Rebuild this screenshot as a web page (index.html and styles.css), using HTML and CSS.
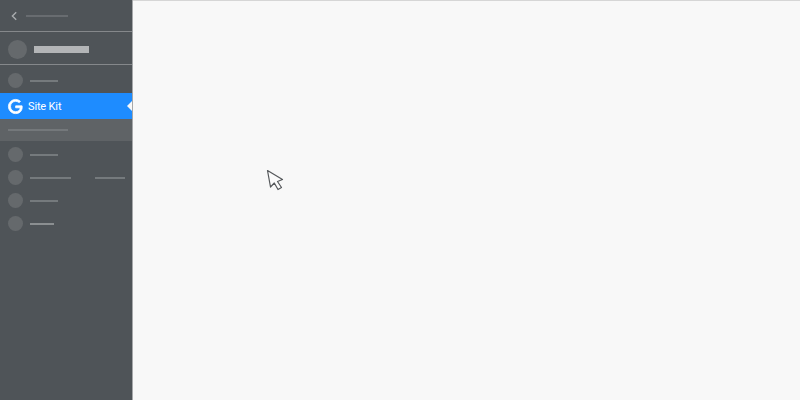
FILE: index.html
```html
<!DOCTYPE html>
<html lang="en">
<head>
  <meta charset="UTF-8">
  <title>Site Kit</title>
  <link rel="stylesheet" href="styles.css">
</head>
<body>
  <div class="app">

    <!-- Sidebar -->
    <nav class="sidebar">
      <div class="back-row">
        <svg class="chevron" width="8" height="12" viewBox="0 0 8 12">
          <path d="M6.2 2.2 2.4 6 6.2 9.8" fill="none" stroke="#a9acae" stroke-width="1.4"/>
        </svg>
        <span class="bar bar-back"></span>
      </div>

      <div class="account-row">
        <span class="dot dot-large"></span>
        <span class="bar bar-account"></span>
      </div>

      <div class="item item-first">
        <span class="dot"></span>
        <span class="bar bar-short"></span>
      </div>

      <div class="item-active">
        <svg class="g-logo" width="17" height="17" viewBox="0 0 24 24">
          <path fill="#fff" stroke="#fff" stroke-width="1.1" d="M21.35 11.1h-9.17v2.73h6.51c-.33 3.81-3.5 5.44-6.5 5.44C8.36 19.27 5 16.25 5 12c0-4.1 3.2-7.27 7.2-7.27 3.09 0 4.9 1.97 4.9 1.97L19 4.72S16.56 2 12.1 2C6.42 2 2 6.8 2 12c0 5.05 4.13 10 10.22 10 5.35 0 9.25-3.67 9.25-9.09 0-1.15-.12-1.81-.12-1.81z"/>
        </svg>
        <span class="item-label">Site Kit</span>
        <span class="active-arrow"></span>
      </div>

      <div class="section-row">
        <span class="bar bar-section"></span>
      </div>

      <div class="item-list">
        <div class="item">
          <span class="dot"></span>
          <span class="bar bar-short"></span>
        </div>
        <div class="item">
          <span class="dot"></span>
          <span class="bar bar-long"></span>
          <span class="bar bar-side"></span>
        </div>
        <div class="item">
          <span class="dot"></span>
          <span class="bar bar-short"></span>
        </div>
        <div class="item">
          <span class="dot"></span>
          <span class="bar bar-tiny"></span>
        </div>
      </div>
    </nav>

    <!-- Empty content area -->
    <main class="content"></main>
  </div>

  <svg class="cursor" width="20" height="24" viewBox="0 0 20 24">
    <path d="M1.5 1.5 16.5 10.5 11.5 12.5 15.5 18.5 12 20.5 8.3 14 4.5 18z" fill="#fbfbfb" stroke="#55585b" stroke-width="1.2" stroke-linejoin="round"/>
  </svg>
</body>
</html>
```

FILE: styles.css
```css
body {
  margin: 0;
  background-color: #f8f8f8;
  font-family: Roboto, "Liberation Sans", sans-serif;
  overflow: hidden;
}
.app {
  display: flex;
  height: 400px;
}
.sidebar {
  width: 132px;
  flex-shrink: 0;
  background-color: #4f5458;
  border-right: 1px solid #a6a8aa;
  display: flex;
  flex-direction: column;
}
.content {
  flex: 1;
  background-color: #f8f8f8;
  border-top: 1px solid #d6d6d6;
}
.back-row {
  height: 32px;
  box-sizing: border-box;
  display: flex;
  align-items: center;
  padding-left: 10px;
  gap: 8px;
  border-bottom: 1px solid #85888b;
}
.account-row {
  height: 33px;
  box-sizing: border-box;
  display: flex;
  align-items: center;
  padding: 2px 0 0 8px;
  gap: 7px;
  border-bottom: 1px solid #85888b;
}
.item {
  height: 23px;
  display: flex;
  align-items: center;
  padding-left: 8px;
  gap: 7px;
}
.item-first {
  height: 28px;
  box-sizing: border-box;
  padding-top: 3px;
}
.item-active {
  height: 26px;
  background-color: #1e8cff;
  display: flex;
  align-items: center;
  padding-left: 7px;
  gap: 4px;
  position: relative;
}
.item-label {
  color: #fff;
  font-size: 11px;
  letter-spacing: -0.15px;
}
.active-arrow {
  position: absolute;
  right: 0;
  top: 8px;
  border-top: 5px solid transparent;
  border-bottom: 5px solid transparent;
  border-right: 5px solid #f8f8f8;
}
.section-row {
  height: 22px;
  background-color: #5f6366;
  display: flex;
  align-items: center;
  padding-left: 8px;
}
.item-list {
  padding-top: 2px;
}
.dot {
  width: 15px;
  height: 15px;
  border-radius: 50%;
  background-color: #65696c;
  flex-shrink: 0;
}
.dot-large {
  width: 19px;
  height: 19px;
}
.bar {
  display: block;
  height: 2px;
  background-color: #757a7d;
}
.bar-back {
  width: 42px;
  background-color: #686c70;
}
.bar-account {
  width: 55px;
  height: 7px;
  background-color: #b3b5b7;
}
.bar-short {
  width: 28px;
}
.bar-long {
  width: 41px;
}
.bar-side {
  width: 30px;
  margin-left: 17px;
}
.bar-tiny {
  width: 24px;
  background-color: #8b8f91;
}
.bar-section {
  width: 60px;
  background-color: #74787b;
}
.cursor {
  position: absolute;
  left: 266px;
  top: 169px;
}
```
